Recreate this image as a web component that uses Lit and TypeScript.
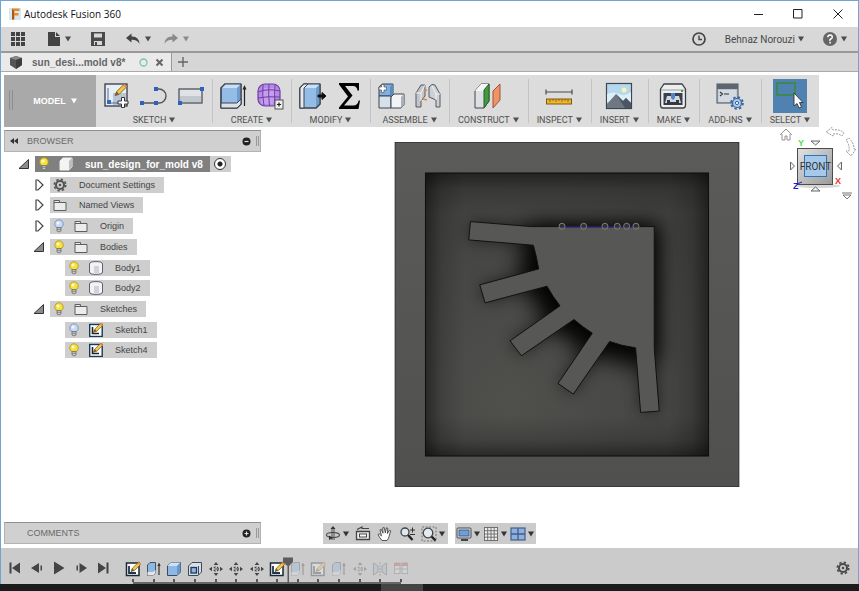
import { LitElement, html, svg, css, TemplateResult, SVGTemplateResult } from "lit";
import { customElement } from "lit/decorators.js";

type Art = SVGTemplateResult;

/** Wraps drawing commands in an icon-sized svg. */
const icon = (art: Art, w: number, h = w): TemplateResult =>
  html`<svg width=${w} height=${h} viewBox="0 0 ${w} ${h}" aria-hidden="true">${art}</svg>`;

const caret = html`<svg class="caret" width="6" height="6" viewBox="0 0 6 6" aria-hidden="true"><path d="M0 0.6h6L3 5.6z" fill="currentColor"/></svg>`;

const pencil = (x: number, y: number, s: number): Art => svg`<g transform="translate(${x} ${y}) scale(${s})">
  <path d="M0 10L1.4 6.6 8 0.2 10.2 2.4 3.6 9z" fill="#f3c748" stroke="#76612a" stroke-width="0.8"/>
  <path d="M0 10L1.4 6.6 3.6 9z" fill="#7a5a3a"/><path d="M7 1.2L8.2 0l2.2 2.2-1.2 1.2z" fill="#e98a53"/></g>`;

const box = (front: string, top: string, side: string): Art => svg`
  <path d="M2 6L6 2H22V22L18 26H2z" fill=${front} stroke="#3c454f" stroke-width="1.2" stroke-linejoin="round"/>
  <path d="M2 6L6 2H22L18 6z" fill=${top}/><path d="M18 6L22 2V22L18 26z" fill=${side}/>
  <path d="M2 6L6 2H22V22L18 26H2z" fill="none" stroke="#3c454f" stroke-width="1.2" stroke-linejoin="round"/>`;

const gear = (c: number, r: number, color: string): Art => svg`
  <circle cx=${c} cy=${c} r=${r * 0.62} fill="none" stroke=${color} stroke-width=${r * 0.32}/>
  <circle cx=${c} cy=${c} r=${r * 0.88} fill="none" stroke=${color} stroke-width=${r * 0.26} stroke-dasharray="${r * 0.36} ${r * 0.331}"/>
  <circle cx=${c} cy=${c} r=${r * 0.2} fill=${color}/>`;

const tools = {
  sketch: svg`<rect x="2" y="2" width="22" height="22" fill="#e9eef4" stroke="#343b44" stroke-width="1.3"/>
    <rect x="10" y="11" width="13" height="12" fill="#b9c5d4"/><path d="M5 6V21H20" fill="none" stroke="#4a6fa8" stroke-width="1"/><rect x="4" y="18" width="4" height="4" fill="#3768c0"/>
    ${pencil(12, 2, 1.15)}
    <path d="M18.5 15.5h3v3.5H25v3h-3.5v3.5h-3V22H15v-3h3.5z" fill="#fff" stroke="#333" stroke-width="1"/>`,
  line: svg`<path d="M2 21H19A7 7 0 0 0 19 7H16" fill="none" stroke="#555" stroke-width="1.4"/>
    <rect x="0" y="19" width="4" height="4" fill="#2d5fc4"/><rect x="14" y="19" width="4" height="4" fill="#2d5fc4"/><rect x="14" y="5" width="4" height="4" fill="#2d5fc4"/>`,
  rect: svg`<rect x="2" y="7" width="23" height="14" fill="#dfe3e8" stroke="#4d5259" stroke-width="1.3"/><rect x="3" y="14" width="21" height="6" fill="#c3c8cf"/>
    <rect x="23" y="5" width="4" height="4" fill="#2d5fc4"/><rect x="1" y="19" width="4" height="4" fill="#2d5fc4"/>`,
  extrude: svg`${box("#93bce6", "#c9e0f6", "#6f9ccd")}<path d="M2 21H18L22 17V22L18 26H2z" fill="#dde1e6" stroke="#3c454f" stroke-width="1"/>
    <path d="M25.5 24V5" stroke="#222" stroke-width="1.2"/><path d="M23.5 7.5L25.5 3l2 4.5z" fill="#222"/>`,
  form: svg`<rect x="2" y="2" width="22" height="22" rx="7" fill="#b78ae6" stroke="#6c3fa3" stroke-width="1.2"/>
    <path d="M8 6h12l-3 16H5z" fill="#cfa9f4" opacity=".6"/>
    <path d="M2 10Q12 6 24 9M2 16Q12 14 24 15M7 3Q6 13 8 24M13 2Q12 12 13.500 24M19 3Q18 12 19 23" fill="none" stroke="#6c3fa3" stroke-width="1"/>
    <rect x="19" y="18" width="8" height="9" fill="#ededed" stroke="#444" stroke-width="0.9"/><path d="M21 22.500h4M23 20.500v4" stroke="#222" stroke-width="1.2"/>`,
  press: svg`${box("#93bce6", "#c9e0f6", "#6f9ccd")}<path d="M2 6L6 2H10L6 6V26H2z" fill="#e5eaf0" stroke="#3c454f" stroke-width="1"/>
    <path d="M20 13h4V10.500l4 3.500-4 3.500V15h-4z" fill="#111" stroke="#111"/>`,
  sigma: svg`<path d="M4 1H24V8.500H22.500Q22 4 18 4H10L17.500 13.500 9 23.500H18.500Q22.500 23.500 23.700 18.500H25L23.500 27H4V25.500L13 14.500 4 2.500z" fill="#000"/>`,
  joint: svg`<path d="M2 5l3-3H16V14H2z" fill="#7fb0e2" stroke="#3c454f"/><path d="M13 5l3-3V14h-3z" fill="#5b8ac0"/>
    <path d="M2 14h12v12H2z" fill="#d7e1ec" stroke="#3c454f"/><path d="M14 15l3-3H27V23l-3 3H14z" fill="#f1f3f5" stroke="#3c454f"/><path d="M24 15l3-3V23l-3 3z" fill="#aab1b9"/>
    <path d="M4.500 2.500h2.500v2.500H9.500v3H7v2.500H4.500V8H2V5h2.500z" fill="#fff" stroke="#555" stroke-width="0.7"/>`,
  asbuilt: svg`<path d="M2 25V11L7 3H11V14L7 19V25z" fill="#c2c6cb" stroke="#555b62"/><path d="M2 11h5L11 3M7 11v8" fill="none" stroke="#fff" stroke-width="0.8"/>
    <path d="M15 5Q18 1 21 3L26 12V25H22V18L15 15z" fill="#ccd0d5" stroke="#555b62"/><path d="M22 12h4M22 12v6M22 12L18 4" fill="none" stroke="#fff" stroke-width="0.8"/>
    <path d="M10 9l3-1M9 17l4 1" stroke="#e8883c" stroke-width="1.8"/>`,
  plane: svg`<path d="M1 9L7 2H15V19L10 26H1z" fill="#dce0e4" stroke="#444"/><path d="M1 9L7 2H15L10 9z" fill="#f4f5f6"/><path d="M10 8L15 2V19L10 26z" fill="#3f9b3d" stroke="#2c5f2b"/>
    <path d="M19 9L26 2V18L19 26z" fill="#ee9468" stroke="#9c5434"/>`,
  measure: svg`<path d="M1 10H27M1 7.500v5M27 7.500v5" stroke="#4a4a4a" stroke-width="1.2"/><rect x="1.500" y="17" width="25" height="5" fill="#f0b528" stroke="#7c5a13"/>
    <path d="M5 17v3M8 17v2M11 17v3M14 17v2M17 17v3M20 17v2M23 17v3" stroke="#7c5a13" stroke-width="0.8"/>`,
  image: svg`<rect x="1.500" y="1.500" width="25" height="25" fill="#b5d8ee" stroke="#3d4650" stroke-width="1.200"/><path d="M2 12q6-3 12 0t12-2v10H2z" fill="#dceef7"/><circle cx="19" cy="8" r="2.500" fill="#fdf3b0"/>
    <path d="M2 22L11 12 18 19 21 16 26 21V26H2z" fill="#6e7783"/><path d="M11 12L20 26H26V21L21 16l-3 3z" fill="#4c5561"/>`,
  printer: svg`<path d="M1.500 7L5 2H23L26.500 7V23Q26.500 26 24 26H4Q1.500 26 1.500 23z" fill="#eceef0" stroke="#3c3f44" stroke-width="1.300"/><path d="M2 8H26" stroke="#9aa0a7"/>
    <rect x="4.500" y="11" width="19" height="12" fill="#3a4049"/><path d="M6 21L8 14H20L22 21z" fill="#d3d7dc"/><path d="M5 21h3v-3h3v2h6v-2h3v3h3v2H5z" fill="#343a43"/><path d="M12 11h4v5l-2 2-2-2z" fill="#4c86cf"/><rect x="22" y="8" width="2" height="2" fill="#43a047"/>`,
  script: svg`<rect x="1" y="2" width="21" height="19" fill="#b7c0cb" stroke="#4a525c"/><rect x="1" y="2" width="21" height="5" fill="#5c6570"/><rect x="2.500" y="8" width="18" height="12" fill="#d4dae1"/>
    <path d="M4 10l2.500 2L4 14M8 12h5" fill="none" stroke="#333" stroke-width="1.100"/>
    <circle cx="21" cy="21" r="5.800" fill="none" stroke="#39659c" stroke-width="2" stroke-dasharray="2.400 2.150"/><circle cx="21" cy="21" r="4.500" fill="#a9c8ea" stroke="#39659c" stroke-width="1.200"/><circle cx="21" cy="21" r="1.600" fill="#fff" stroke="#39659c"/>`,
  select: svg`<rect x="4" y="4" width="18" height="12" fill="none" stroke="#3c8a34" stroke-width="1.500"/>
    <path d="M21 14V27L24 24.500 26 29 28.500 28 26.500 23.500H30z" fill="#fff" stroke="#333" stroke-width="0.900"/>`,
};

const bulb = (on: boolean): TemplateResult => icon(svg`
  <circle cx="6" cy="5" r="4.200" fill=${on ? "#f7e23c" : "#c6dbf5"} stroke=${on ? "#b39a1e" : "#7890b5"} stroke-width="0.900"/>
  <circle cx="5" cy="4" r="1.500" fill="#fff" opacity=".8"/>
  <path d="M4 8.500h4v3.500q-2 1.800-4 0z" fill="#c9c9c9" stroke="#6b6b6b" stroke-width="0.800"/><path d="M4 10.300h4" stroke="#6b6b6b" stroke-width="0.700"/>`, 12, 14);

const kinds: Record<string, Art> = {
  root: svg`<path d="M1 4L4 1H13V10L10 13H1z" fill="#f4f4f4" stroke="#eee"/><path d="M10 4L13 1V10L10 13z" fill="#bdbdbd"/>`,
  settings: gear(7, 6.5, "#555"),
  folder: svg`<path d="M1 2.500H6.500V4.500H13V12.500H1z" fill="#ececec" stroke="#5a5f66"/><path d="M1 4.500h12" stroke="#5a5f66"/>`,
  body: svg`<path d="M0.500 3Q0.500 0.600 7 0.600T13.500 3V11Q13.500 13.400 7 13.400T0.500 11z" fill="#f3f3f5" stroke="#5d6168"/><path d="M5 5h5v7H5z" fill="#cfd2d8"/>`,
  sketch: svg`<rect x="0.700" y="1.500" width="12.500" height="12" fill="#fff" stroke="#16395c" stroke-width="1.400"/><path d="M3.500 4V10.500H10" fill="none" stroke="#222" stroke-width="1.600"/>${pencil(4.5, 0, 0.92)}`,
};

const steps: Record<string, Art> = {
  sketch: svg`<rect x="1.500" y="2" width="12.500" height="12.500" fill="#fff" stroke="#1d2730" stroke-width="1.500"/><path d="M4 5V12H11" fill="none" stroke="#1c3550" stroke-width="1.800"/>${pencil(6, 1, 0.95)}`,
  extrude: svg`<path d="M1.500 4L4 1.500H9.500V12L7 14.500H1.500z" fill="#8cb8e6" stroke="#47525e"/><path d="M1.500 11H7l2.500-2V12L7 14.500H1.500z" fill="#e2e5e9"/><path d="M13 14V4" stroke="#333" stroke-width="1.200"/><path d="M11.300 5L13 1.500 14.700 5z" fill="#333"/>`,
  box: svg`<path d="M1.500 5L5 1.500H14.500V11L11 14.500H1.500z" fill="#8cb8e6" stroke="#3a4a5c"/><path d="M1.500 5L5 1.500H14.500L11 5z" fill="#cfe2f5"/><path d="M11 5v9.500L14.500 11V1.500z" fill="#6a97c8"/>`,
  shell: svg`<path d="M1.500 5L5 1.500H14.500V11L11 14.500H1.500z" fill="#d8dee6" stroke="#3a4a5c"/><rect x="4" y="6.500" width="5.500" height="5.500" fill="#8cb8e6" stroke="#24364a" stroke-width="1.300"/><path d="M11.500 5v9" stroke="#3a4a5c"/>`,
  move: svg`<path d="M8 1L10.300 4H5.700zM8 15L10.300 12H5.700zM1 8L4 5.700V10.300zM15 8L12 5.700V10.300z" fill="#444"/><circle cx="8" cy="8" r="2.200" fill="none" stroke="#444" stroke-width="1.300" stroke-dasharray="2 1.450"/><circle cx="8" cy="8" r="0.800" fill="#444"/>`,
  mirror: svg`<path d="M1.500 2L6 5V11L1.500 14zM14.500 2L10 5V11L14.500 14z" fill="#a9bdd3" stroke="#4c5a69"/><path d="M8 1v14" stroke="#4c5a69" stroke-dasharray="2 1"/>`,
  group: svg`<rect x="1.500" y="2" width="5.500" height="10.500" fill="#dfe3e8" stroke="#777"/><rect x="9" y="2" width="5.500" height="10.500" fill="#dfe3e8" stroke="#777"/><path d="M1 2h6.500v3H1zM8.500 2H15v3H8.500z" fill="#b84a4a"/><path d="M1.500 8h13" stroke="#777"/>`,
};

const view = {
  orbit: svg`<ellipse cx="8" cy="9" rx="6.500" ry="2.500" fill="none" stroke="#444" stroke-width="1.100"/><path d="M7 2v12M9 2v12" fill="none" stroke="#444" stroke-width="0.900"/><path d="M5.500 3L8 0l2.500 3zM4 9.500l4 2.500-4 2z" fill="#333"/>`,
  look: svg`<path d="M1.500 5.500h13v8h-13z" fill="#eee" stroke="#444" stroke-width="1.300"/><rect x="4.500" y="8" width="7" height="3" fill="#fff" stroke="#444"/><path d="M2 3.500L7 1v1.500h7" fill="none" stroke="#444" stroke-width="1.200"/>`,
  pan: svg`<path d="M5 14.500Q2 11 1 8.500L2.200 7.800 4.500 10 3 4 4.200 3.200 6 7.200 5.800 1.800 7.200 1.500 8.300 6.800 9.500 1.800 10.800 2.200 10.400 7.500 12.500 4.200 13.700 4.800 12 10.500Q11.500 13 10 14.500z" fill="#fff" stroke="#444" stroke-width="0.900"/>`,
  zoom: svg`<circle cx="6" cy="6" r="4" fill="#dce8f2" stroke="#444" stroke-width="1.300"/><path d="M9 9l4.500 5" stroke="#222" stroke-width="2.400"/><path d="M11 4h5M13.500 1.500v5M11 8.500h5" stroke="#333"/>`,
  window: svg`<path d="M1 1h14v14H1z" fill="none" stroke="#777" stroke-dasharray="2 1.500"/><circle cx="7" cy="7" r="4.800" fill="#e2ebf2" stroke="#444" stroke-width="1.300"/><path d="M10.500 10.500l4 4" stroke="#222" stroke-width="2.400"/>`,
  display: svg`<rect x="1" y="2" width="14" height="10" rx="1" fill="#e6e9ec" stroke="#444"/><rect x="3" y="4" width="10" height="6" fill="#6f9fd8" stroke="#3d5f8c"/><path d="M5 14h7" stroke="#444" stroke-width="2"/>`,
  grid: svg`<path d="M1.500 1.500h13v13h-13z" fill="#eee"/><path d="M1.500 1v14M4.700 1v14M8 1v14M11.200 1v14M14.500 1v14M1 1.500h14M1 4.700h14M1 8h14M1 11.200h14M1 14.500h14" stroke="#666" stroke-width="0.900"/>`,
  panes: svg`<rect x="1" y="2" width="14" height="12" fill="#8fb0dc" stroke="#3f5f8f" stroke-width="1.200"/><path d="M8 2v12M1 8h14" stroke="#3f5f8f" stroke-width="1.300"/>`,
};

const groups: { label: string; items: [string, Art][]; active?: boolean }[] = [
  { label: "SKETCH", items: [["Create Sketch", tools.sketch], ["Line", tools.line], ["Rectangle", tools.rect]] },
  { label: "CREATE", items: [["Extrude", tools.extrude], ["Create Form", tools.form]] },
  { label: "MODIFY", items: [["Press Pull", tools.press], ["Parameters", tools.sigma]] },
  { label: "ASSEMBLE", items: [["New Component", tools.joint], ["Joint", tools.asbuilt]] },
  { label: "CONSTRUCT", items: [["Offset Plane", tools.plane]] },
  { label: "INSPECT", items: [["Measure", tools.measure]] },
  { label: "INSERT", items: [["Insert Image", tools.image]] },
  { label: "MAKE", items: [["3D Print", tools.printer]] },
  { label: "ADD-INS", items: [["Scripts and Add-Ins", tools.script]] },
  { label: "SELECT", items: [["Select", tools.select]], active: true },
];

interface TreeNode { name: string; kind: string; level: number; open?: boolean; lit?: boolean }
const nodes: TreeNode[] = [
  { name: "sun_design_for_mold v8", kind: "root", level: 0, open: true, lit: true },
  { name: "Document Settings", kind: "settings", level: 1, open: false },
  { name: "Named Views", kind: "folder", level: 1, open: false },
  { name: "Origin", kind: "folder", level: 1, open: false, lit: false },
  { name: "Bodies", kind: "folder", level: 1, open: true, lit: true },
  { name: "Body1", kind: "body", level: 2, lit: true },
  { name: "Body2", kind: "body", level: 2, lit: true },
  { name: "Sketches", kind: "folder", level: 1, open: true, lit: true },
  { name: "Sketch1", kind: "sketch", level: 2, lit: false },
  { name: "Sketch4", kind: "sketch", level: 2, lit: true },
];

const history = ["sketch", "extrude", "box", "shell", "move", "move", "move", "sketch",
  "extrude", "sketch", "extrude", "move", "mirror", "group"];
const done = 8;

@customElement("fusion-toolbar")
export class FusionToolbar extends LitElement {
  static styles = css`
    :host { display: flex; flex: none; margin: 3px 0 0 3px; height: 52px; align-self: flex-start; background: #dcdcdc; color: #505050; }
    button { border: 0; padding: 0; background: none; color: inherit; font: 9px Roboto, sans-serif; display: flex; align-items: center; justify-content: center; white-space: nowrap; }
    svg { display: block; flex: none; }
    .mode { width: 92px; padding-left: 10px; background: #a9a9a9; color: #fff; font: bold 9px "Liberation Sans", sans-serif; gap: 5px; position: relative; }
    .mode::before { content: ""; position: absolute; left: 5px; top: 15px; width: 2px; height: 20px; border: solid #8d8d8d; border-width: 0 1px; }
    .group { display: flex; flex-direction: column; align-items: center; justify-content: space-between; padding: 4px 0 1px; position: relative; }
    .group + .group::before { content: ""; position: absolute; left: 0; top: 4px; bottom: 4px; width: 1px; background: #c3c3c3; }
    .icons { display: flex; gap: 9px; padding: 0 7px; height: 34px; align-items: center; }
    .icons .active { background: #4f82b1; width: 34px; height: 34px; }
    .label { margin: 0 9px; gap: 3px; height: 12px; }
  `;
  render() {
    return html`
      <button class="mode">MODEL ${caret}</button>
      ${groups.map((g) => html`<div class="group">
        <div class="icons">${g.items.map(([name, art]) => html`<button class=${g.active ? "active" : ""} aria-label=${name}>${icon(art, g.active ? 34 : 28)}</button>`)}</div>
        <button class="label">${g.label} ${caret}</button>
      </div>`)}`;
  }
}

@customElement("browser-tree")
export class BrowserTree extends LitElement {
  static styles = css`
    :host { display: block; }
    ul { list-style: none; margin: 4px 0 0; padding: 0; display: grid; grid-auto-rows: 1fr; height: 207px; font: 9px "Liberation Sans", sans-serif; color: #444; }
    li { display: flex; align-items: flex-start; }
    svg { display: block; flex: none; }
    .l0 { padding-left: 14px; }
    .l1 { padding-left: 29px; }
    .l2 { padding-left: 61px; }
    .twist { border: 0; padding: 0; background: none; width: 12px; height: 16px; margin-right: 5px; display: flex; align-items: center; }
    .row { display: flex; align-items: center; gap: 9px; height: 16px; padding: 0 9px 0 3px; background: #cecece; white-space: nowrap; }
    .row span { margin-left: 3px; }
    .l0 .row { background: #808080; color: #fff; font-weight: bold; font-size: 10px; padding-right: 7px; }
    .radio { width: 21px; height: 16px; background: #cecece; display: flex; align-items: center; justify-content: center; }
    .radio input { appearance: none; margin: 0; width: 12px; height: 12px; border: 1px solid #333; border-radius: 50%; background: radial-gradient(circle, #222 2px, #fff 3px); }
  `;
  render() {
    return html`<ul>${nodes.map((n) => html`<li class="l${n.level}">
      ${n.open === undefined ? "" : html`<button class="twist" aria-expanded=${n.open} aria-label="Toggle ${n.name}">${n.open
        ? icon(svg`<path d="M10.500 1.500V10.500H1z" fill="#8c8c8c" stroke="#333"/>`, 12)
        : icon(svg`<path d="M3 1H5L10 6 5 11H3z" fill="#fff" stroke="#444" stroke-width="1.200"/>`, 12)}</button>`}
      <div class="row">${n.lit === undefined ? "" : bulb(n.lit)}${icon(kinds[n.kind], 14)}<span>${n.name}</span></div>
      ${n.level === 0 ? html`<label class="radio"><input type="radio" checked aria-label="Activate component"></label>` : ""}
    </li>`)}</ul>`;
  }
}

@customElement("model-view")
export class ModelView extends LitElement {
  static styles = css`
    :host { display: block; min-height: 0; }
    svg { display: block; width: 100%; height: 100%; }
  `;
  render() {
    const part = "M242 259L425 274H794V640L809 828 753 832 738 638Q698 633 660 619L551 777 505 745 608 594Q578 575 553 553L395 662 361 617 511 512Q489 484 472 453L286 503 270 449 447 401Q441 365 431 330L237 314z";
    return html`<svg viewBox="15 20 1034 1036" role="img" aria-label="Mold model">
      <defs>
        <linearGradient id="face" x1="0" y1="0" x2="0" y2="1"><stop offset="0" stop-color="#5b5b59"/><stop offset="1" stop-color="#50504e"/></linearGradient>
        <radialGradient id="floor" cx=".3" cy=".8" r=".9"><stop offset="0" stop-color="#4f4f4c"/><stop offset=".6" stop-color="#464645"/><stop offset="1" stop-color="#3e3e3d"/></radialGradient>
        <linearGradient id="side"><stop offset="0" stop-color="#000" stop-opacity=".45"/><stop offset=".4" stop-color="#000" stop-opacity=".15"/><stop offset="1" stop-color="#000" stop-opacity="0"/></linearGradient>
        <filter id="soft" x="-40%" y="-40%" width="180%" height="180%"><feGaussianBlur stdDeviation="32"/></filter>
        <filter id="near" x="-30%" y="-30%" width="160%" height="160%"><feGaussianBlur stdDeviation="22"/></filter>
        <clipPath id="well"><rect x="107" y="113" width="850" height="850"/></clipPath>
      </defs>
      <rect x="16" y="21" width="1032" height="1034" fill="url(#face)" stroke="#2b2b2b" stroke-width="3"/>
      <g clip-path="url(#well)">
        <rect x="107" y="113" width="850" height="850" fill="url(#floor)"/>
        ${[0, 90, 180, 270].map((a) => svg`<rect x="107" y="113" width="120" height="850" fill="url(#side)" transform="rotate(${a} 532 538)"/>`)}
        <path d="M430 285H790V660L725 675 570 625 455 515 405 385z" fill="#000" stroke="#000" stroke-width="36" filter="url(#soft)" opacity=".9"/>
        <path d=${part} fill="#000" filter="url(#near)" opacity=".5"/>
      </g>
      <rect x="107" y="113" width="850" height="850" fill="none" stroke="#0e0e0e" stroke-width="3"/>
      <path d=${part} fill="#575755" stroke="#111" stroke-width="3"/>
      <path d="M517 276H739" stroke="#34307a" stroke-width="4"/>
      ${[517, 582, 646, 683, 711, 739].map((x) => svg`<circle cx=${x} cy="273" r="9" fill="#444" fill-opacity=".5" stroke="#7d7d7b" stroke-width="3"/>`)}
    </svg>`;
  }
}

@customElement("view-cube")
export class ViewCube extends LitElement {
  static styles = css`
    :host { display: block; }
    svg { display: block; }
    text { font: 10px Roboto, sans-serif; }
    .axis { font: bold 9px "Liberation Sans", sans-serif; }
  `;
  render() {
    return html`<svg width="83" height="77" viewBox="775 127 83 77" role="img" aria-label="View cube">
      <defs><linearGradient id="c" x1="0" y1="0" x2="1" y2="1"><stop offset="0" stop-color="#e2e2e2"/><stop offset="1" stop-color="#9a9a9a"/></linearGradient></defs>
      <path d="M780 135L786 129 792 135M782 134v6h3v-4h2v4h3v-6" fill="none" stroke="#888" stroke-width="0.900"/>
      <path d="M826 132L832 127.500 833 130Q840 129 844 133L842 136Q838 133 833 134L833 136z" fill="#fff" stroke="#999" stroke-dasharray="2 1"/>
      <path d="M846 140L849 138Q854 143 854 149L856 149 851 156 846 151 849 151Q850 145 846 140z" fill="#fff" stroke="#999" stroke-dasharray="2 1"/>
      <ellipse cx="818" cy="186" rx="22" ry="2" fill="#d8d8d8"/>
      <rect x="797.500" y="148.500" width="35" height="36" fill="url(#c)" stroke="#4c4c4c"/>
      <rect x="804.500" y="155.500" width="22" height="21" fill="#a5c9ea" stroke="#2f74b8"/>
      <path d="M811 141h9l-4.500 4zM811 191h9l-4.500-4zM790.500 162v8l4-4zM841.500 162v8l-4-4z" fill="#f4f4f4" stroke="#666"/>
      <path d="M842 193h10M843 195h8l-4 4z" fill="#fff" stroke="#777"/>
      <text x="815.500" y="170" text-anchor="middle" fill="#333">FRONT</text>
      <text class="axis" x="798" y="146" fill="#4be04b">Y</text>
      <text class="axis" x="835" y="184" fill="#e5322d">X</text>
      <text class="axis" x="793" y="189" fill="#1f1fd0">Z</text>
      <path d="M797 184l5-2" stroke="#1f1fd0"/>
    </svg>`;
  }
}

@customElement("app-root")
export class AppRoot extends LitElement {
  static styles = css`
    :host { display: flex; flex-direction: column; height: 100vh; box-sizing: border-box; background: #fff; font: 9px "Liberation Sans", sans-serif; color: #4a4a4a; }
    button { border: 0; padding: 0; background: none; color: inherit; font: inherit; display: flex; align-items: center; justify-content: center; }
    svg { display: block; flex: none; }
    .frame { flex: 1; min-height: 0; display: flex; flex-direction: column; border: solid #6fa5d2; border-width: 1px 1px 0; }
    .title { height: 26px; flex: none; display: flex; align-items: center; padding-left: 8px; color: #111; font: 10px "Open Sans", sans-serif; }
    .title h1 { font: inherit; margin: 0 0 0 3px; flex: 1; }
    .title button { width: 40px; height: 26px; }
    .menu { height: 24px; flex: none; display: flex; align-items: center; justify-content: space-between; background: #d8d8d8; padding: 0 11px 0 9px; border-bottom: 2px solid #999; }
    .menu div { display: flex; align-items: center; gap: 19px; }
    .menu .undo { gap: 12px; }
    .menu button { gap: 4px; }
    .faded { color: #8a8a8a; }
    .menu .account { font: 10px Roboto, sans-serif; gap: 3px; }
    .tabs { height: 18px; flex: none; display: flex; background: #d6d6d6; border-bottom: 1px solid #aaa; }
    .tab { display: flex; align-items: center; width: 162px; padding-left: 8px; background: #eaeaea; border-right: 1px solid #999; font-weight: bold; font-size: 10px; color: #666; }
    .tab a { color: inherit; text-decoration: none; margin: 0 14px 0 9px; white-space: nowrap; }
    .tab button { margin-left: 7px; }
    .add { width: 22px; }
    .work { flex: 1; min-height: 0; display: grid; grid-template: minmax(0, 1fr) / 275px minmax(0, 1fr); position: relative; }
    aside { display: flex; flex-direction: column; justify-content: space-between; padding: 3px 0 4px 3px; }
    .panel { width: 257px; height: 22px; box-sizing: border-box; display: flex; align-items: center; gap: 8px; background: #d0d0d0; border: 1px solid #b2b2b2; border-top-color: #8e8e8e; padding: 0 1px 0 4px; }
    .panel h2 { margin: 0; flex: 1; font: inherit; color: #6a6a6a; }
    .panel.plain { padding-left: 22px; }
    .grip { width: 1px; height: 10px; border: solid #999; border-width: 0 1px; }
    .panel .grip { margin-left: -3px; }
    main { display: grid; grid-template-rows: minmax(0, 1fr); padding: 15px 0 61px; min-height: 0; }
    .cube { position: absolute; right: 0; top: 0; }
    .nav { position: absolute; left: 0; right: 0; bottom: 4px; display: flex; justify-content: center; gap: 7px; }
    .nav div { display: flex; gap: 6px; background: #cbcbcb; height: 21px; padding: 0 3px 0 2px; color: #333; }
    .nav .display { gap: 3px; padding: 0 2px 0 1px; }
    .nav button { gap: 2px; }
    .timeline { height: 36px; flex: none; display: flex; background: #cbcbcb; padding: 0 8px 0 7px; color: #444; }
    .play { display: flex; gap: 8px; width: 115px; padding-top: 3px; }
    .steps { display: flex; list-style: none; margin: 0; padding: 0; width: 288px; }
    .steps li { flex: 1; display: flex; flex-direction: column; align-items: center; justify-content: flex-end; position: relative; }
    .steps button { margin-bottom: 2px; }
    .tick { width: 2px; height: 3px; background: #555; }
    .rail { align-self: stretch; height: 2px; background: #666; }
    .steps li:first-child .rail { margin-left: 10px; }
    .steps li:last-child .rail { margin-right: 10px; }
    .todo button { opacity: .3; }
    .marker { position: absolute; right: -5px; bottom: 0; z-index: 1; }
    .gear { margin-left: auto; padding-top: 3px; }
    .taskbar { height: 7px; flex: none; background: #1b1b1d; display: flex; justify-content: center; }
    .taskbar i { width: 42px; background: #444; margin-right: 56px; }
  `;
  render() {
    return html`
      <div class="frame">
        <header class="title">
          ${icon(svg`<rect width="12" height="12" fill="#d6e8f3"/><path d="M3 0.500H10.500V3H5.500V5H9.500V7.500H5.500V11.500H3z" fill="#e88a2a"/><path d="M3 0.500L5 3V11.500H3z" fill="#a95a17"/>`, 12)}
          <h1>Autodesk Fusion 360</h1>
          <button aria-label="Minimize">${icon(svg`<path d="M1 5.500h9" stroke="#222"/>`, 10)}</button>
          <button aria-label="Maximize">${icon(svg`<path d="M0.500 0.500h8.500v8.500h-8.500z" fill="none" stroke="#222"/>`, 10)}</button>
          <button aria-label="Close">${icon(svg`<path d="M0.500 0.500l9 9M9.500 0.500l-9 9" stroke="#222"/>`, 10)}</button>
        </header>
        <nav class="menu">
          <div>
            <button aria-label="Data panel">${icon(svg`<path d="M1 1h4v4H1zM6 1h4v4H6zM11 1h4v4h-4zM1 6h4v4H1zM6 6h4v4H6zM11 6h4v4h-4zM1 11h4v4H1zM6 11h4v4H6zM11 11h4v4h-4z" fill="#444"/>`, 16)}</button>
            <button aria-label="File">${icon(svg`<path d="M3 1h7v5h5v9H3zM11 1l4 4h-4z" fill="#444"/>`, 16)}${caret}</button>
            <button aria-label="Save">${icon(svg`<path d="M1 1h14v14H1z" fill="#4a4a4a"/><path d="M4 2.500h8v4H4zM4 10h8v4H4z" fill="#d8d8d8"/><path d="M6 11v3" stroke="#4a4a4a" stroke-width="2"/>`, 16)}</button>
            <div class="undo">
              <button aria-label="Undo">${icon(svg`<path d="M1 7L6.500 2.500V5.500Q14 5 14.500 13 12 8.500 6.500 8.800V11.500z" fill="#444"/>`, 16)}${caret}</button>
              <button class="faded" aria-label="Redo">${icon(svg`<path d="M15 7L9.500 2.500V5.500Q2 5 1.500 13 4 8.500 9.500 8.800V11.500z" fill="#8a8a8a"/>`, 16)}${caret}</button>
            </div>
          </div>
          <div>
            <button aria-label="Job status">${icon(svg`<circle cx="7" cy="7" r="6" fill="none" stroke="#444" stroke-width="1.700"/><path d="M7 3.500V7.500H10" fill="none" stroke="#444" stroke-width="1.400"/>`, 14)}</button>
            <button class="account">Behnaz Norouzi ${caret}</button>
            <button aria-label="Help">${icon(svg`<circle cx="7" cy="7" r="7" fill="#666"/><path d="M4.800 5.200Q5 3 7.100 3T9.300 5.200Q9.200 6.300 7.800 7T7.100 8.800M7.100 9.800v1.800" fill="none" stroke="#fff" stroke-width="1.500"/>`, 14)}${caret}</button>
          </div>
        </nav>
        <div class="tabs">
          <div class="tab">
            ${icon(svg`<path d="M1 3L7 1l6 2v7l-6 4-6-4z" fill="#555"/><path d="M1 3l6 2 6-2-6-2z" fill="#888"/><path d="M7 5l6-2v7l-6 4z" fill="#3d3d3d"/>`, 14)}
            <a href="#design">sun_desi...mold v8*</a>
            ${icon(svg`<circle cx="4.500" cy="4.500" r="3.500" fill="none" stroke="#7dc4a4" stroke-width="1.300"/>`, 9)}
            <button aria-label="Close tab">${icon(svg`<path d="M1.500 1.500l6 6M7.500 1.500l-6 6" stroke="#666" stroke-width="2"/>`, 9)}</button>
          </div>
          <button class="add" aria-label="New tab">${icon(svg`<path d="M5 0v10M0 5h10" stroke="#666" stroke-width="1.400"/>`, 10)}</button>
        </div>
        <fusion-toolbar></fusion-toolbar>
        <div class="work">
          <aside>
            <section>
              <div class="panel">
                <button aria-label="Collapse browser">${icon(svg`<path d="M5 1v6L1 4zM9 1v6L5 4z" fill="#333"/>`, 10, 8)}</button>
                <h2>BROWSER</h2>
                <button aria-label="Minimize browser">${icon(svg`<circle cx="4.500" cy="4.500" r="4" fill="#222"/><path d="M2.500 4.500h4" stroke="#ddd" stroke-width="1.200"/>`, 9)}</button>
                <span class="grip"></span>
              </div>
              <browser-tree></browser-tree>
            </section>
            <div class="panel plain">
              <h2>COMMENTS</h2>
              <button aria-label="Add comment">${icon(svg`<circle cx="4.500" cy="4.500" r="4" fill="#222"/><path d="M2.500 4.500h4M4.500 2.500v4" stroke="#ddd" stroke-width="1.200"/>`, 9)}</button>
              <span class="grip"></span>
            </div>
          </aside>
          <main><model-view></model-view></main>
          <view-cube class="cube"></view-cube>
          <div class="nav">
            <div>
              <button aria-label="Orbit">${icon(view.orbit, 16)}${caret}</button>
              <button aria-label="Look at">${icon(view.look, 16)}</button>
              <button aria-label="Pan">${icon(view.pan, 16)}</button>
              <button aria-label="Zoom">${icon(view.zoom, 16)}</button>
              <button aria-label="Zoom window">${icon(view.window, 16)}${caret}</button>
            </div>
            <div class="display">
              <button aria-label="Display settings">${icon(view.display, 16)}${caret}</button>
              <button aria-label="Grid and snaps">${icon(view.grid, 16)}${caret}</button>
              <button aria-label="Viewports">${icon(view.panes, 16)}${caret}</button>
            </div>
          </div>
        </div>
        <footer class="timeline">
          <div class="play">
            <button aria-label="Go to start">${icon(svg`<path d="M1.500 1.500h2v11h-2zM12 1.500v11L4 7z" fill="#444"/>`, 14)}</button>
            <button aria-label="Step back">${icon(svg`<path d="M9 2v10L1 7zM10.500 4.500h1.500v5h-1.500z" fill="#444"/>`, 14)}</button>
            <button aria-label="Play">${icon(svg`<path d="M2 0.500L12.500 7 2 13.500z" fill="#444"/>`, 14)}</button>
            <button aria-label="Step forward">${icon(svg`<path d="M5.500 2v10L13 7zM2.500 4.500h1.500v5H2.500z" fill="#444"/>`, 14)}</button>
            <button aria-label="Go to end">${icon(svg`<path d="M10.500 1.500h2v11h-2zM2 1.500v11L10 7z" fill="#444"/>`, 14)}</button>
          </div>
          <ul class="steps">${history.map((k, i) => html`<li class=${i < done ? "" : "todo"}>
            <button aria-label="Feature ${i + 1}">${icon(steps[k], 16)}</button>
            <span class="tick"></span><span class="rail"></span>
            ${i === done - 1 ? html`<span class="marker">${icon(svg`<path d="M0 0.500h10v4.500L6 9v18H4.500V9L0 5z" fill="#5c5c5c"/>`, 10, 27)}</span>` : ""}
          </li>`)}</ul>
          <button class="gear" aria-label="Timeline settings">${icon(gear(7, 6.5, "#4a4a4a"), 14)}</button>
        </footer>
      </div>
      <div class="taskbar"><i></i></div>`;
  }
}
